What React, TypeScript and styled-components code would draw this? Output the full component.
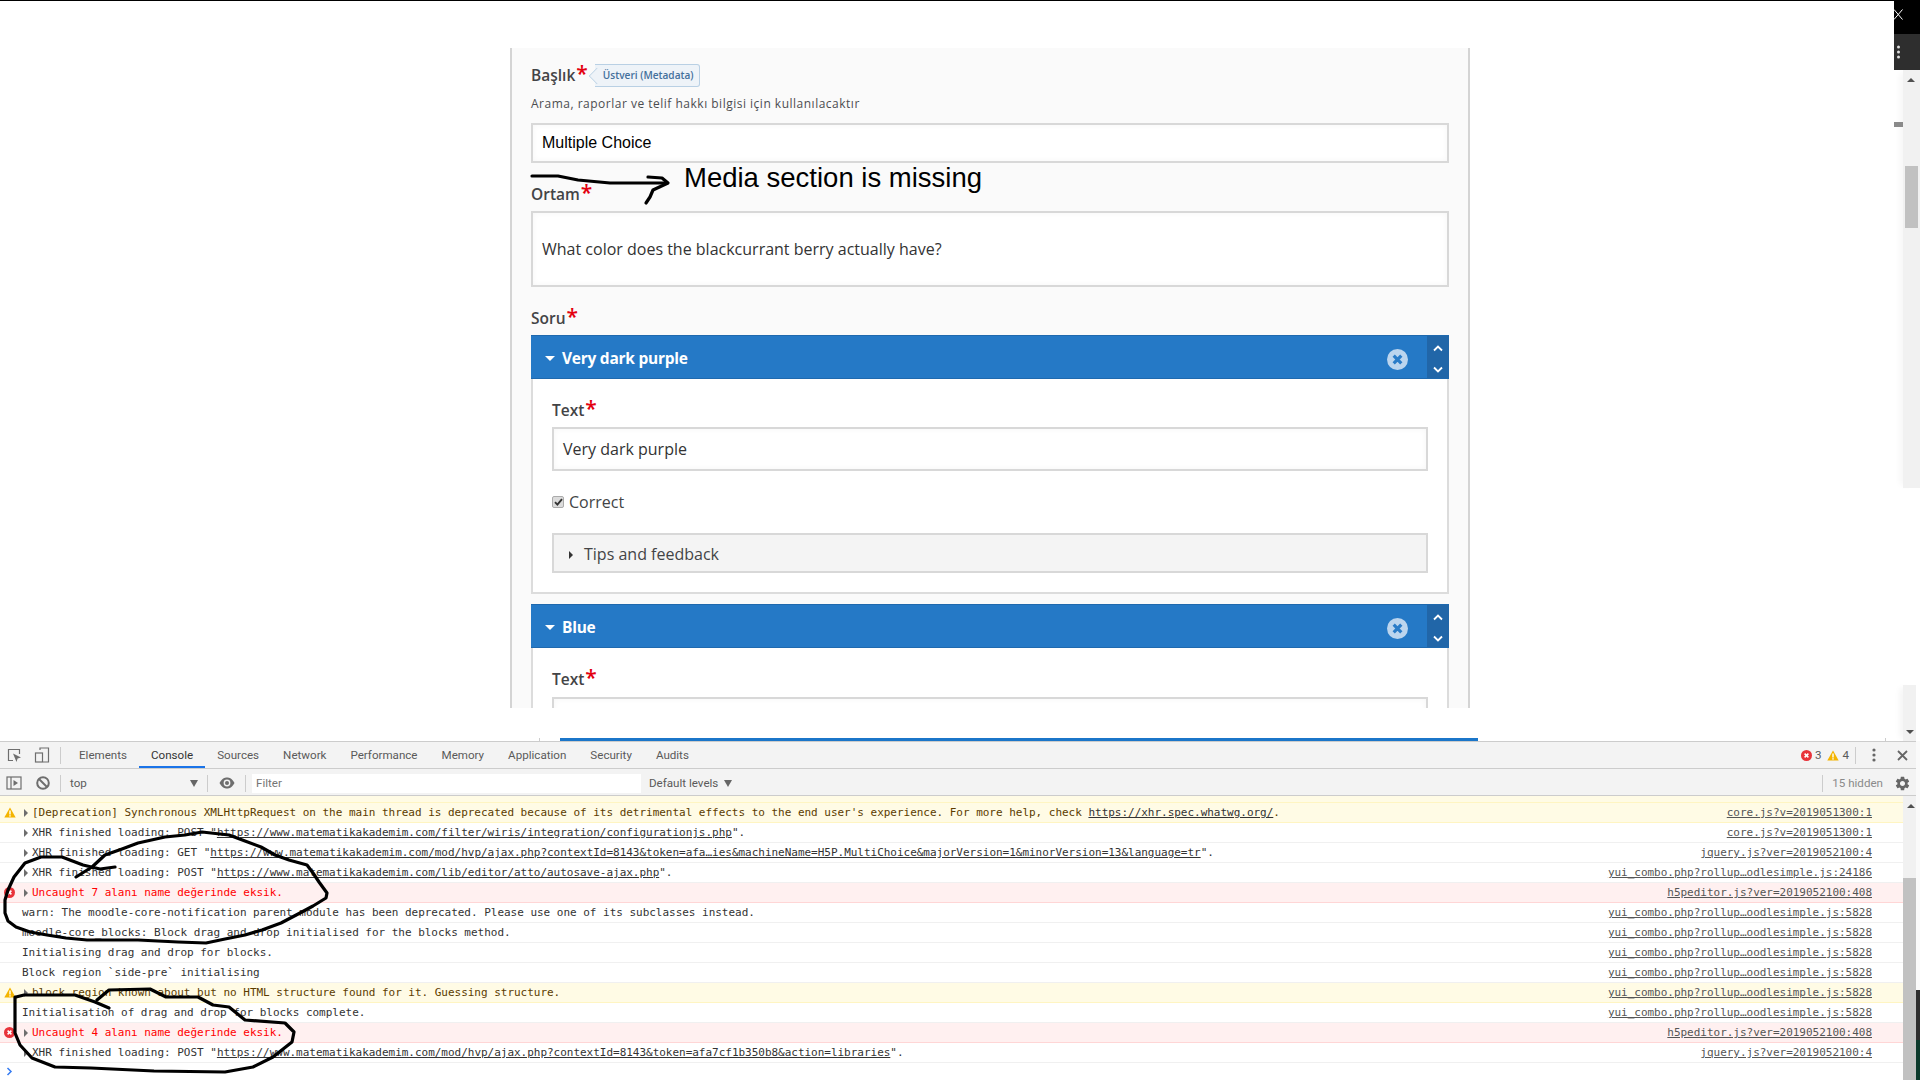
import React from 'react';
import styled, { createGlobalStyle } from 'styled-components';
import { MdSettings } from 'react-icons/md';

const GlobalStyle = createGlobalStyle`
  html, body {
    margin: 0;
    padding: 0;
    background: #fff;
    overflow: hidden;
  }
  * {
    box-sizing: border-box;
  }
`;

const Screen = styled.div`
  position: relative;
  width: 1920px;
  height: 1080px;
  overflow: hidden;
  display: flex;
  flex-direction: column;
  background: #fff;
`;

// Upper part: the page under test
const Upper = styled.div`
  display: flex;
  height: 741px;
  flex: none;
`;

const PageArea = styled.div`
  flex: 1;
  min-width: 0;
  border-top: 1px solid #000;
  padding-top: 47px;
  display: flex;
  flex-direction: column;
`;

const Panel = styled.div`
  width: 960px;
  height: 660px;
  margin-left: 510px;
  padding: 15px 19px 0;
  overflow: hidden;
  background: #fafafa;
  border-left: 2px solid #d4d4d4;
  border-right: 2px solid #d4d4d4;
  font-family: 'Open Sans', sans-serif;
  flex: none;
`;

const StripRow = styled.div`
  display: flex;
  align-items: flex-end;
  height: 33px;
`;

const Tick = styled.div<{ $left: number }>`
  width: 1px;
  height: 3px;
  margin-left: ${(p) => p.$left}px;
  background: #ccc;
`;

const LoadBar = styled.div`
  width: 918px;
  height: 3px;
  margin-left: 20px;
  background: #1b76c9;
`;

const LabelRow = styled.div<{ $top?: number }>`
  display: flex;
  align-items: center;
  height: 24px;
  margin-top: ${(p) => p.$top ?? 0}px;
`;

const Label = styled.span`
  font-size: 15.5px;
  font-weight: 600;
  color: #434446;
`;

const Star = styled.span`
  align-self: flex-start;
  margin-left: 1px;
  font-size: 21px;
  line-height: 21px;
  font-weight: 600;
  color: #e3000f;
`;

const MetaTag = styled.div`
  position: relative;
  display: flex;
  align-items: center;
  height: 23px;
  margin-left: 7px;
  padding: 0 5px 0 8px;
  font-size: 10.1px;
  font-weight: 600;
  color: #44709c;
  background: #eef3f8;
  border: 1px solid #b9d0e4;
  border-left: none;
  border-radius: 0 3px 3px 0;

  &::before {
    content: '';
    position: absolute;
    left: -6px;
    top: 3px;
    width: 15px;
    height: 15px;
    transform: rotate(45deg) scale(0.72);
    background: #eef3f8;
    border-left: 1px solid #b9d0e4;
    border-bottom: 1px solid #b9d0e4;
  }

  span {
    position: relative;
  }
`;

const Description = styled.div`
  height: 18px;
  margin-top: 8px;
  font-size: 12px;
  line-height: 18px;
  letter-spacing: 0.5px;
  color: #4c4d50;
`;

const TextBox = styled.div<{ $height: number; $top: number; $arial?: boolean }>`
  display: flex;
  align-items: center;
  height: ${(p) => p.$height}px;
  margin-top: ${(p) => p.$top}px;
  padding: 0 9px;
  background: #fff;
  border: 2px solid #d8d8d8;
  box-shadow: inset 0 0 6px rgba(0, 0, 0, 0.04);
  font-family: ${(p) => (p.$arial ? "'Liberation Sans'" : "'Open Sans'")}, sans-serif;
  font-size: 16px;
  color: ${(p) => (p.$arial ? '#000' : '#333')};
  flex: none;
`;

const GroupHeader = styled.div<{ $top: number }>`
  display: flex;
  align-items: center;
  height: 44px;
  margin-top: ${(p) => p.$top}px;
  padding-left: 14px;
  background: #2579c6;
  border-top: 1px solid #1f69ae;
  border-bottom: 1px solid #1f69ae;
  color: #fff;
  flex: none;
`;

const GroupCaret = styled.span`
  width: 0;
  height: 0;
  margin-top: 3px;
  border-left: 5px solid transparent;
  border-right: 5px solid transparent;
  border-top: 5px solid #fff;
`;

const GroupTitle = styled.span`
  margin-left: 7px;
  padding-top: 2px;
  font-size: 15.5px;
  font-weight: 700;
  letter-spacing: -0.25px;
`;

const RemoveButton = styled.svg`
  margin-left: auto;
  margin-right: 19px;
  margin-top: 4px;
`;

const MoveColumn = styled.div`
  display: flex;
  flex-direction: column;
  align-items: center;
  justify-content: space-between;
  width: 22px;
  height: 100%;
  padding: 9px 0 5px;
  background: #2166a8;
`;

const GroupBody = styled.div`
  padding: 19px 19px 19px;
  background: #fff;
  border: 2px solid #dcdcdc;
  border-top: none;
`;

const CheckRow = styled.div`
  display: flex;
  align-items: center;
  height: 24px;
  margin-top: 19px;
  font-size: 16px;
  color: #434446;
`;

const CheckBox = styled.span`
  display: flex;
  align-items: center;
  justify-content: center;
  width: 12px;
  height: 12px;
  margin-right: 5px;
  background: #dcdcdc;
  border: 1px solid #ababab;
  border-radius: 2px;
`;

const TipsBox = styled.div`
  display: flex;
  align-items: center;
  height: 40px;
  margin-top: 19px;
  padding-left: 15px;
  padding-top: 1px;
  background: #f4f4f4;
  border: 2px solid #d8d8d8;
  font-size: 16px;
  color: #434446;
`;

const TipsCaret = styled.span`
  width: 0;
  height: 0;
  margin-right: 11px;
  margin-top: 2px;
  border-top: 4px solid transparent;
  border-bottom: 4px solid transparent;
  border-left: 4px solid #333;
`;

// Browser chrome lying over the page
const CornerBlock = styled.div`
  position: absolute;
  top: 0;
  right: 0;
  width: 26px;
  height: 70px;
  background: #2e2e2e;

  &::before {
    content: '';
    display: block;
    height: 34px;
    background: #000;
  }
`;

const CornerClose = styled.svg`
  position: absolute;
  top: 9px;
  left: 0;
`;

const CornerDots = styled.svg`
  position: absolute;
  top: 44px;
  left: 1.5px;
`;

const PageMark = styled.div`
  position: absolute;
  top: 122px;
  left: 1894px;
  width: 9px;
  height: 5px;
  background: #8a8a8a;
`;

const PageScrollbar = styled.div`
  display: flex;
  flex-direction: column;
  width: 17px;
  flex: none;
  padding-top: 70px;
`;

const ScrollUpper = styled.div`
  position: relative;
  height: 418px;
  background: #f1f1f1;
  box-shadow: -6px 0 6px -3px rgba(0, 0, 0, 0.04);
`;

const ScrollThumb = styled.div`
  position: absolute;
  left: 2px;
  top: 96px;
  width: 13px;
  height: 62px;
  background: #c1c1c1;
`;

const ScrollArrow = styled.span<{ $down?: boolean }>`
  position: absolute;
  left: ${(p) => (p.$down ? 3 : 4)}px;
  ${(p) => (p.$down ? 'bottom: 7px;' : 'top: 8px;')}
  width: 0;
  height: 0;
  border-left: 4px solid transparent;
  border-right: 4px solid transparent;
  ${(p) => (p.$down ? 'border-top: 4px solid #505050;' : 'border-bottom: 4px solid #505050;')}
`;

const ScrollGap = styled.div`
  height: 197px;
  background: #fff;
`;

const ScrollLower = styled.div`
  position: relative;
  flex: 1;
  width: 13px;
  background: #f1f1f1;
  box-shadow: -6px 0 6px -3px rgba(0, 0, 0, 0.05);
`;

// Lower part: devtools
const Lower = styled.div`
  display: flex;
  flex: 1;
  min-height: 0;
`;

const DevTools = styled.div`
  display: flex;
  flex-direction: column;
  width: 1916px;
  flex: none;
  font-family: Roboto, sans-serif;
  font-size: 11.6px;
  color: #5a5a5a;
`;

const EdgeStrip = styled.div`
  display: flex;
  flex-direction: column;
  flex: 1;
`;

const EdgeBlock = styled.div<{ $color: string; $height?: number }>`
  flex: ${(p) => (p.$height ? 'none' : 1)};
  height: ${(p) => (p.$height ? `${p.$height}px` : 'auto')};
  background: ${(p) => p.$color};
`;

const Toolbar = styled.div<{ $first?: boolean }>`
  display: flex;
  align-items: center;
  height: ${(p) => (p.$first ? 28 : 27)}px;
  padding-top: ${(p) => (p.$first ? 0 : 2)}px;
  background: #f3f3f3;
  border-top: ${(p) => (p.$first ? '1px solid #ccc' : 'none')};
  border-bottom: 1px solid #ccc;
  flex: none;
`;

const IconSlot = styled.span<{ $width: number }>`
  display: flex;
  align-items: center;
  justify-content: center;
  width: ${(p) => p.$width}px;
  height: 100%;
  flex: none;
`;

const Divider = styled.span<{ $left?: number; $right?: number; $auto?: boolean }>`
  width: 1px;
  height: 17px;
  margin-left: ${(p) => (p.$auto ? 'auto' : `${p.$left ?? 0}px`)};
  margin-right: ${(p) => p.$right ?? 0}px;
  background: #ccc;
  flex: none;
`;

const Tab = styled.span<{ $active?: boolean }>`
  display: flex;
  align-items: center;
  height: 100%;
  padding: 2px 12px 0;
  color: ${(p) => (p.$active ? '#333' : '#5a5a5a')};
  border-bottom: 2px solid ${(p) => (p.$active ? '#1a73e8' : 'transparent')};
`;

const Counts = styled.div`
  display: flex;
  align-items: center;
  gap: 3px;
  margin-left: auto;
  margin-right: 6px;
`;

const CountGap = styled.span`
  width: 0;
`;

const TopSelect = styled.div`
  display: flex;
  align-items: center;
  width: 146px;
  height: 100%;
  padding: 0 9px;
`;

const SelectArrow = styled.span<{ $left?: string }>`
  width: 0;
  height: 0;
  margin-left: ${(p) => p.$left ?? 'auto'};
  border-left: 4px solid transparent;
  border-right: 4px solid transparent;
  border-top: 7px solid #666;
`;

const FilterBox = styled.div`
  display: flex;
  align-items: center;
  width: 389px;
  height: 19px;
  margin-left: 6px;
  padding-left: 4px;
  background: #fff;
  color: #757575;
`;

const Levels = styled.div`
  display: flex;
  align-items: center;
  width: 87px;
  margin-left: 8px;
`;

const Hidden = styled.span`
  margin-left: 9px;
  margin-right: 5px;
  color: #8a8a8a;
`;

const ConsoleArea = styled.div`
  display: flex;
  flex: 1;
  min-height: 0;
`;

const LogList = styled.div`
  flex: 1;
  min-width: 0;
  background: #fff;
  font-family: 'DejaVu Sans Mono', monospace;
  font-size: 11px;
  letter-spacing: -0.02px;
  color: #333;
`;

const CutRow = styled.div`
  height: 7px;
  background: #fffbe5;
  border-bottom: 1px solid #fff5c2;
`;

const LogRow = styled.div<{ $kind: LogKind }>`
  display: flex;
  align-items: center;
  height: 20px;
  padding-right: 31px;
  white-space: nowrap;
  border-bottom: 1px solid
    ${(p) => (p.$kind === 'warn' ? '#fff5c2' : p.$kind === 'error' ? '#ffd6d6' : '#f0f0f0')};
  background: ${(p) => (p.$kind === 'warn' ? '#fffbe5' : p.$kind === 'error' ? '#fff0f0' : '#fff')};
  color: ${(p) => (p.$kind === 'warn' ? '#5c3c00' : p.$kind === 'error' ? '#f00' : '#333')};
`;

const RowGutter = styled.span`
  display: flex;
  align-items: center;
  width: 22px;
  padding-left: 4px;
  flex: none;
`;

const RowArrow = styled.span`
  width: 0;
  height: 0;
  margin-left: 2px;
  margin-right: 4px;
  border-top: 4px solid transparent;
  border-bottom: 4px solid transparent;
  border-left: 4px solid #6e6e6e;
  flex: none;
`;

const RowLink = styled.span`
  text-decoration: underline;
  color: #333;
`;

const RowSource = styled.span`
  margin-left: auto;
  text-decoration: underline;
  color: #555;
`;

const Prompt = styled.svg`
  display: block;
  margin: 4px 0 0 6px;
`;

const LogScrollbar = styled.div`
  display: flex;
  flex-direction: column;
  width: 13px;
  background: #f1f1f1;
  flex: none;
`;

const LogScrollTop = styled.div`
  position: relative;
  height: 82px;
`;

const LogScrollThumb = styled.div`
  flex: 1;
  background: #c1c1c1;
`;

// Hand-drawn marks on top of the screenshot
const Scribbles = styled.svg`
  position: absolute;
  top: 0;
  left: 0;
  pointer-events: none;
`;

const Note = styled.div`
  position: absolute;
  left: 684px;
  top: 160px;
  font-family: 'Liberation Sans', sans-serif;
  font-size: 27.5px;
  line-height: 35px;
  color: #000;
`;

type LogKind = 'plain' | 'warn' | 'error';

type LogEntry = {
  kind: LogKind;
  arrow?: boolean;
  text: string;
  link?: string;
  tail?: string;
  source?: string;
};

const COMBO = 'yui_combo.php?rollup…oodlesimple.js:5828';

const logs: LogEntry[] = [
  {
    kind: 'warn',
    arrow: true,
    text: "[Deprecation] Synchronous XMLHttpRequest on the main thread is deprecated because of its detrimental effects to the end user's experience. For more help, check ",
    link: 'https://xhr.spec.whatwg.org/',
    tail: '.',
    source: 'core.js?v=2019051300:1',
  },
  {
    kind: 'plain',
    arrow: true,
    text: 'XHR finished loading: POST "',
    link: 'https://www.matematikakademim.com/filter/wiris/integration/configurationjs.php',
    tail: '".',
    source: 'core.js?v=2019051300:1',
  },
  {
    kind: 'plain',
    arrow: true,
    text: 'XHR finished loading: GET "',
    link: 'https://www.matematikakademim.com/mod/hvp/ajax.php?contextId=8143&token=afa…ies&machineName=H5P.MultiChoice&majorVersion=1&minorVersion=13&language=tr',
    tail: '".',
    source: 'jquery.js?ver=2019052100:4',
  },
  {
    kind: 'plain',
    arrow: true,
    text: 'XHR finished loading: POST "',
    link: 'https://www.matematikakademim.com/lib/editor/atto/autosave-ajax.php',
    tail: '".',
    source: 'yui_combo.php?rollup…odlesimple.js:24186',
  },
  {
    kind: 'error',
    arrow: true,
    text: 'Uncaught 7 alanı name değerinde eksik.',
    source: 'h5peditor.js?ver=2019052100:408',
  },
  {
    kind: 'plain',
    text: 'warn: The moodle-core-notification parent module has been deprecated. Please use one of its subclasses instead.',
    source: COMBO,
  },
  {
    kind: 'plain',
    text: 'moodle-core_blocks: Block drag and drop initialised for the blocks method.',
    source: COMBO,
  },
  { kind: 'plain', text: 'Initialising drag and drop for blocks.', source: COMBO },
  { kind: 'plain', text: 'Block region `side-pre` initialising', source: COMBO },
  {
    kind: 'warn',
    arrow: true,
    text: 'block region known about but no HTML structure found for it. Guessing structure.',
    source: COMBO,
  },
  { kind: 'plain', text: 'Initialisation of drag and drop for blocks complete.', source: COMBO },
  {
    kind: 'error',
    arrow: true,
    text: 'Uncaught 4 alanı name değerinde eksik.',
    source: 'h5peditor.js?ver=2019052100:408',
  },
  {
    kind: 'plain',
    arrow: true,
    text: 'XHR finished loading: POST "',
    link: 'https://www.matematikakademim.com/mod/hvp/ajax.php?contextId=8143&token=afa7cf1b350b8&action=libraries',
    tail: '".',
    source: 'jquery.js?ver=2019052100:4',
  },
];

const tabs = ['Elements', 'Console', 'Sources', 'Network', 'Performance', 'Memory', 'Application', 'Security', 'Audits'];

const WarnIcon = () => (
  <svg width="12" height="11" viewBox="0 0 12 11">
    <path d="M6 0.5 L11.7 10.5 H0.3 Z" fill="#f4b400" />
    <rect x="5.3" y="3.5" width="1.4" height="4" fill="#fff" />
    <rect x="5.3" y="8.2" width="1.4" height="1.4" fill="#fff" />
  </svg>
);

const ErrorIcon = () => (
  <svg width="11" height="11" viewBox="0 0 11 11">
    <circle cx="5.5" cy="5.5" r="5.5" fill="#e8333a" />
    <path d="M3.6 3.6 L7.4 7.4 M7.4 3.6 L3.6 7.4" stroke="#fff" strokeWidth="1.5" />
  </svg>
);

const Chevron = ({ down }: { down?: boolean }) => (
  <svg width="10" height="7" viewBox="0 0 10 7">
    <path
      d={down ? 'M1 1.5 L5 5.5 L9 1.5' : 'M1 5.5 L5 1.5 L9 5.5'}
      fill="none"
      stroke="#fff"
      strokeWidth="1.8"
    />
  </svg>
);

const RemoveIcon = () => (
  <RemoveButton width="21" height="21" viewBox="0 0 21 21">
    <circle cx="10.5" cy="10.5" r="10.5" fill="#bcd5ee" />
    <path d="M6.7 6.7 L14.3 14.3 M14.3 6.7 L6.7 14.3" stroke="#2a7cc8" strokeWidth="3.2" />
  </RemoveButton>
);

const Group = ({ title, children, top }: { title: string; top: number; children: React.ReactNode }) => (
  <>
    <GroupHeader $top={top}>
      <GroupCaret />
      <GroupTitle>{title}</GroupTitle>
      <RemoveIcon />
      <MoveColumn>
        <Chevron />
        <Chevron down />
      </MoveColumn>
    </GroupHeader>
    <GroupBody>{children}</GroupBody>
  </>
);

const FormPanel = () => (
  <Panel>
    <LabelRow>
      <Label>Başlık</Label>
      <Star>*</Star>
      <MetaTag>
        <span>Üstveri (Metadata)</span>
      </MetaTag>
    </LabelRow>
    <Description>Arama, raporlar ve telif hakkı bilgisi için kullanılacaktır</Description>
    <TextBox $height={40} $top={10} $arial>
      Multiple Choice
    </TextBox>
    <LabelRow $top={19}>
      <Label>Ortam</Label>
      <Star>*</Star>
    </LabelRow>
    <TextBox $height={76} $top={5}>
      What color does the blackcurrant berry actually have?
    </TextBox>
    <LabelRow $top={19}>
      <Label>Soru</Label>
      <Star>*</Star>
    </LabelRow>
    <Group title="Very dark purple" top={5}>
      <LabelRow>
        <Label>Text</Label>
        <Star>*</Star>
      </LabelRow>
      <TextBox $height={44} $top={5}>
        Very dark purple
      </TextBox>
      <CheckRow>
        <CheckBox>
          <svg width="9" height="8" viewBox="0 0 9 8">
            <path d="M1 4.2 L3.4 6.6 L8 1.2" fill="none" stroke="#333" strokeWidth="1.9" />
          </svg>
        </CheckBox>
        Correct
      </CheckRow>
      <TipsBox>
        <TipsCaret />
        Tips and feedback
      </TipsBox>
    </Group>
    <Group title="Blue" top={10}>
      <LabelRow>
        <Label>Text</Label>
        <Star>*</Star>
      </LabelRow>
      <TextBox $height={44} $top={6} />
    </Group>
  </Panel>
);

const MainToolbar = () => (
  <Toolbar $first>
    <IconSlot $width={28}>
      <svg width="15" height="15" viewBox="0 0 15 15">
        <path d="M6 12.5 H1.5 V1.5 H12.5 V6" fill="none" stroke="#6e6e6e" strokeWidth="1.2" />
        <path d="M6 5.5 L14 9.5 L10.6 10.6 L9.5 14 Z" fill="#6e6e6e" />
      </svg>
    </IconSlot>
    <IconSlot $width={28}>
      <svg width="16" height="16" viewBox="0 0 16 16">
        <path d="M6 3 V1 H14.5 V15 H9" fill="none" stroke="#6e6e6e" strokeWidth="1.2" />
        <rect x="1.5" y="6" width="7" height="9" fill="none" stroke="#6e6e6e" strokeWidth="1.2" />
      </svg>
    </IconSlot>
    <Divider $left={4} $right={6} />
    {tabs.map((tab) => (
      <Tab key={tab} $active={tab === 'Console'}>
        {tab}
      </Tab>
    ))}
    <Counts>
      <ErrorIcon />
      <span>3</span>
      <CountGap />
      <WarnIcon />
      <span>4</span>
    </Counts>
    <Divider $right={4} />
    <IconSlot $width={28}>
      <svg width="4" height="14" viewBox="0 0 4 14">
        <circle cx="2" cy="2" r="1.6" fill="#666" />
        <circle cx="2" cy="7" r="1.6" fill="#666" />
        <circle cx="2" cy="12" r="1.6" fill="#666" />
      </svg>
    </IconSlot>
    <IconSlot $width={28}>
      <svg width="11" height="11" viewBox="0 0 11 11">
        <path d="M1 1 L10 10 M10 1 L1 10" stroke="#666" strokeWidth="1.8" />
      </svg>
    </IconSlot>
  </Toolbar>
);

const FilterToolbar = () => (
  <Toolbar>
    <IconSlot $width={28}>
      <svg width="16" height="14" viewBox="0 0 16 14">
        <rect x="1" y="1" width="14" height="12" fill="none" stroke="#6e6e6e" strokeWidth="1.2" />
        <path d="M5 1 V13" stroke="#6e6e6e" strokeWidth="1.2" />
        <path d="M7.5 4 L12 7 L7.5 10 Z" fill="#6e6e6e" />
      </svg>
    </IconSlot>
    <IconSlot $width={30}>
      <svg width="14" height="14" viewBox="0 0 14 14">
        <circle cx="7" cy="7" r="5.8" fill="none" stroke="#6e6e6e" strokeWidth="2" />
        <path d="M3 3 L11 11" stroke="#6e6e6e" strokeWidth="2" />
      </svg>
    </IconSlot>
    <Divider $left={2} />
    <TopSelect>
      top
      <SelectArrow />
    </TopSelect>
    <Divider />
    <IconSlot $width={37}>
      <svg width="16" height="12" viewBox="0 0 16 12">
        <path d="M0.5 6 C3 1.5 5.5 0.5 8 0.5 C10.5 0.5 13 1.5 15.5 6 C13 10.5 10.5 11.5 8 11.5 C5.5 11.5 3 10.5 0.5 6 Z" fill="#6e6e6e" />
        <circle cx="8" cy="6" r="3.4" fill="#f3f3f3" />
        <circle cx="8" cy="6" r="2" fill="#6e6e6e" />
      </svg>
    </IconSlot>
    <Divider />
    <FilterBox>Filter</FilterBox>
    <Levels>
      Default levels
      <SelectArrow $left="6px" />
    </Levels>
    <Divider $auto />
    <Hidden>15 hidden</Hidden>
    <IconSlot $width={28}>
      <MdSettings size={17} color="#666" />
    </IconSlot>
  </Toolbar>
);

const ConsoleLog = () => (
  <ConsoleArea>
    <LogList>
      <CutRow />
      {logs.map((entry, i) => (
        <LogRow key={i} $kind={entry.kind}>
          <RowGutter>
            {entry.kind === 'warn' && <WarnIcon />}
            {entry.kind === 'error' && <ErrorIcon />}
          </RowGutter>
          {entry.arrow && <RowArrow />}
          <span>
            {entry.text}
            {entry.link && <RowLink>{entry.link}</RowLink>}
            {entry.tail}
          </span>
          {entry.source && <RowSource>{entry.source}</RowSource>}
        </LogRow>
      ))}
      <Prompt width="7" height="9" viewBox="0 0 7 9">
        <path d="M1.5 1 L5 4.5 L1.5 8" fill="none" stroke="#367cf1" strokeWidth="1.5" />
      </Prompt>
    </LogList>
    <LogScrollbar>
      <LogScrollTop>
        <ScrollArrow />
      </LogScrollTop>
      <LogScrollThumb />
    </LogScrollbar>
  </ConsoleArea>
);

const App = () => (
  <Screen>
    <GlobalStyle />
    <Upper>
      <PageArea>
        <FormPanel />
        <StripRow>
          <Tick $left={539} />
          <LoadBar />
          <Tick $left={407} />
        </StripRow>
      </PageArea>
      <PageScrollbar>
        <ScrollUpper>
          <ScrollArrow />
          <ScrollThumb />
        </ScrollUpper>
        <ScrollGap />
        <ScrollLower>
          <ScrollArrow $down />
        </ScrollLower>
      </PageScrollbar>
    </Upper>
    <Lower>
      <DevTools>
        <MainToolbar />
        <FilterToolbar />
        <ConsoleLog />
      </DevTools>
      <EdgeStrip>
        <EdgeBlock $color="#fafafa" />
        <EdgeBlock $color="#2e2e2e" $height={50} />
        <EdgeBlock $color="#0b3a2c" $height={40} />
      </EdgeStrip>
    </Lower>
    <CornerBlock>
      <CornerClose width="9" height="11" viewBox="0 0 9 11">
        <path d="M0 0.5 L8.5 10.5 M8.5 0.5 L0 10.5" stroke="#fff" strokeWidth="1" />
      </CornerClose>
      <CornerDots width="5" height="17" viewBox="0 0 5 17">
        <circle cx="2.5" cy="3" r="1.5" fill="#e0e0e0" />
        <circle cx="2.5" cy="8" r="1.5" fill="#e0e0e0" />
        <circle cx="2.5" cy="13" r="1.5" fill="#e0e0e0" />
      </CornerDots>
    </CornerBlock>
    <PageMark />
    <Scribbles width="1920" height="1080" viewBox="0 0 1920 1080" fill="none" stroke="#000" strokeWidth="3.2" strokeLinejoin="round" strokeLinecap="round">
      <path d="M532 176 L558 176 L578 180 L610 183 L667 183" />
      <path d="M648 177 L662 178 L668 183 L653 190 L650 197 L646 203" />
      <path d="M76 877 L92 867 L105 855 L122 849 L138 843 L165 837 L185 835 L202 832 L229 835 L245 841 L261 847 L275 855 L289 860 L307 865 L313 873 L319 882 L327 893 L326 898 L313 906 L300 913 L281 923 L262 930 L245 935 L225 939 L206 943 L178 942 L138 940 L87 940 L66 938 L47 935 L30 932 L16 927 L8 921 L5 913 L5 900 L8 890 L14 877 L25 863 L41 857 L62 857 L83 865 L100 869 L115 867" />
      <path d="M109 1008 L95 1002 L75 995 L24 995 L16 997" />
      <path d="M97 1000 L109 990 L150 989 L166 997 L198 997 L213 1005 L229 1007 L245 1020 L285 1023 L294 1032 L292 1042 L273 1057 L253 1067 L225 1072 L154 1071 L91 1068 L55 1067 L32 1058 L20 1045 L15 1033 L15 997" />
    </Scribbles>
    <Note>Media section is missing</Note>
  </Screen>
);

export default App;
